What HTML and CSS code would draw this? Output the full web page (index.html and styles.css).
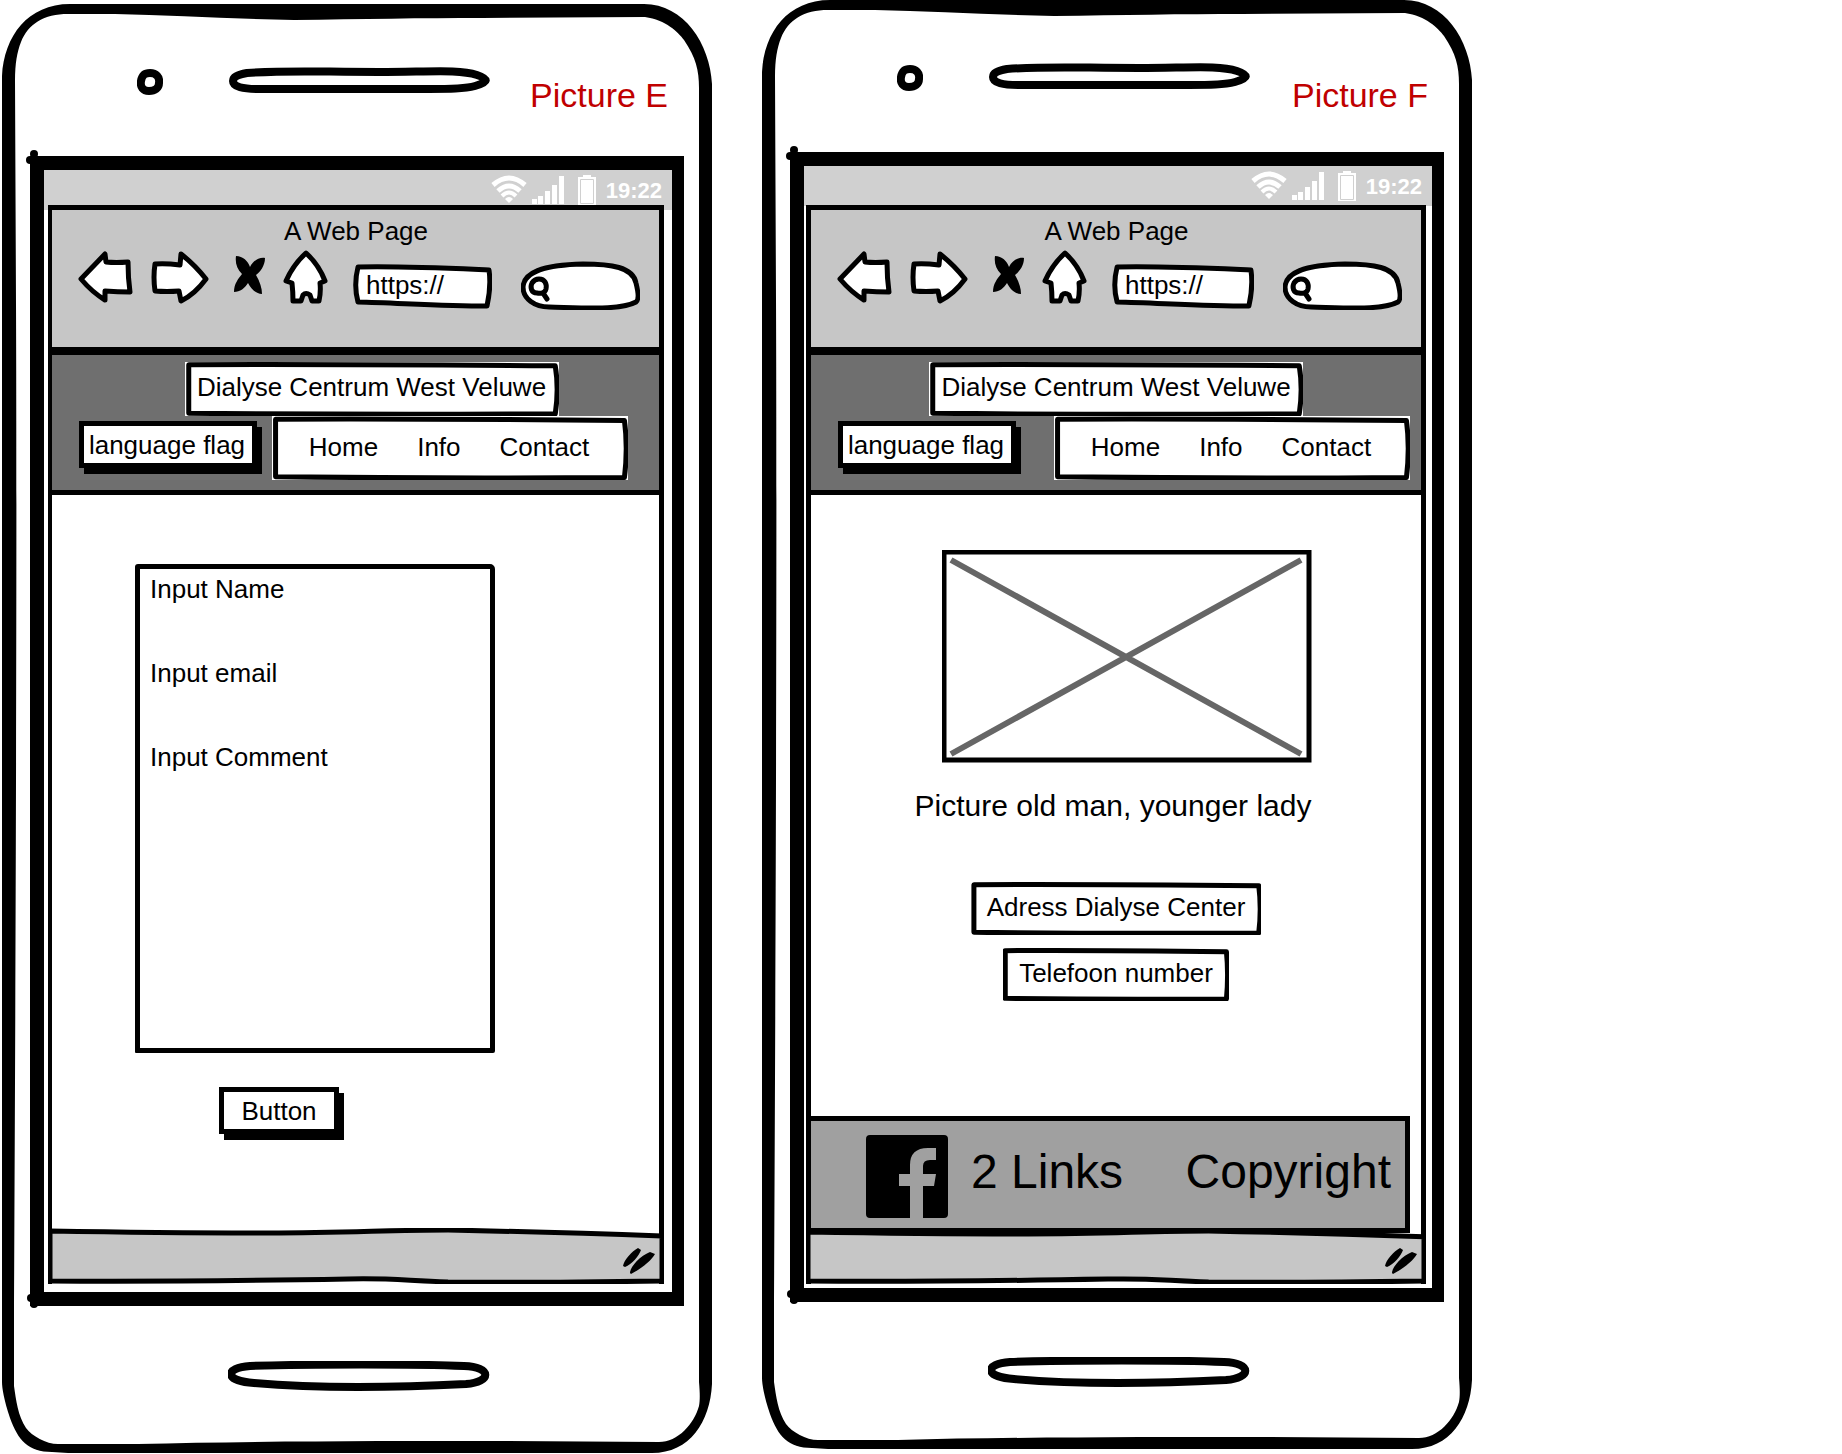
FILE: index.html
```html
<!DOCTYPE html>
<html lang="en">
<head>
<meta charset="utf-8">
<meta name="viewport" content="width=device-width, initial-scale=1">
<title>Dialyse Centrum West Veluwe</title>
<link rel="stylesheet" href="styles.css">
</head>
<body>
<svg class="defs" aria-hidden="true">
  <symbol id="frame" viewBox="0 0 710 1449" preserveAspectRatio="none">
    <path fill-rule="evenodd" d="M0 72C2 32 26 0 68 0H642C682 0 708 40 710 80V1380C708 1418 688 1449 650 1449H66L50 1448C26 1448 16 1436 8 1414C2 1396 0 1384 0 1378ZM13 76C13 60 15 48 19 38C26 20 42 10 66 10H113C170 11 230 15 292 16C360 15 420 14 480 14L643 13C664 16 676 28 682 36C694 54 697 66 697 84V1378C698 1390 698 1396 697 1402C692 1420 676 1438 657 1438L498 1437C380 1437 250 1437 136 1440H56C44 1440 30 1432 24 1424C16 1412 14 1396 12 1382L12 1300C14 900 15 500 14 300Z"/>
  </symbol>
  <symbol id="camera" viewBox="0 0 26 26"><path class="ink" stroke-width="8" d="M13 4C19 4 23 8 22 14C22 19 18 22 12 22C6 22 3 18 4 12C5 6 8 4 13 4Z"/></symbol>
  <symbol id="speaker" viewBox="0 0 262 26"><path class="ink" stroke-width="8" d="M18 6C60 3 90 5 150 5C200 5 230 2 248 8C260 12 260 15 246 19C235 22 220 22 200 22H30C14 22 4 20 4 14C4 10 8 8 18 6Z"/></symbol>
  <symbol id="home-key" viewBox="0 0 262 30"><path class="ink" stroke-width="8" d="M22 5C80 3 190 3 236 5C264 6 264 21 238 23C200 25 170 26 130 26C90 26 60 25 26 22C-4 20 -4 7 22 5Z"/></symbol>
  <symbol id="wifi" viewBox="0 0 36 28"><g fill="none" stroke="#fff" stroke-width="5"><path d="M2 10Q18 -4 34 10"/><path d="M7 16Q18 6 29 16"/></g><g fill="none" stroke="#fff" stroke-width="4"><path d="M11 21Q18 14 25 21"/></g><path fill="#fff" d="M14 24Q18 20 22 24L18 28Z"/></symbol>
  <symbol id="signal" viewBox="0 0 34 29"><path fill="#fff" d="M1 24h5v5H1ZM7 21h5v8H7ZM14 16h5v13h-5ZM21 10h5v19h-5ZM28 1h5v28h-5Z"/></symbol>
  <symbol id="battery" viewBox="0 0 20 30"><path fill="#fff" d="M6 0H14V2H19V30H1V2H6Z"/><path fill="none" stroke="#d0d0d0" d="M3.500 4.500H16.500V28.500H3.500Z"/></symbol>
  <symbol id="back" viewBox="0 0 55 54"><path class="ink white" stroke-width="5" d="M3 29L27 4L28 12Q38 13 50 12Q50 28 52 42Q40 42 27 41V50Q14 42 3 29Z"/></symbol>
  <symbol id="forward" viewBox="0 0 58 54"><path class="ink white" stroke-width="5" d="M4 14Q14 13 29 15L30 4Q44 15 55 29Q44 44 30 51L28 41Q16 42 4 41Q2 27 4 14Z"/></symbol>
  <symbol id="stop" viewBox="0 0 32 54"><path d="M2 6C9 6 14 11 16 17C19 11 25 7 31 8C31 16 26 22 22 25C26 32 28 38 28 44C22 44 17 39 14 33C11 38 6 42 0 42C0 34 4 29 8 24C3 19 1 13 2 6Z"/></symbol>
  <symbol id="house" viewBox="0 0 45 54"><path class="ink white" stroke-width="5" d="M23 3Q36 15 42 31L37 33Q38 42 36 51H29L27 45Q23 42 20 45L18 51H10Q10 42 9 33L3 31Q10 15 23 3Z"/></symbol>
  <symbol id="grip" viewBox="0 0 32 26"><path d="M0 18C1 12 9 3 15 0L18 2C16 8 9 16 2 19ZM7 25C7 19 17 8 27 4L32 6C29 12 18 21 8 26Z"/></symbol>
  <symbol id="box" viewBox="0 0 100 100" preserveAspectRatio="none" overflow="visible"><path class="pen" d="M1 5Q40 4 99 7Q100 50 99 96Q50 98 1 95Q1 50 1 5Z"/></symbol>
  <symbol id="statusline" viewBox="0 0 616 56" preserveAspectRatio="none" overflow="visible"><path class="pen shade" d="M2 3Q120 5 220 5C300 5 340 2 400 2Q500 4 614 8V53Q480 55 400 54C350 52 340 50 300 51Q120 54 2 53Z"/></symbol>
</svg>

<main class="board">
  <section class="phone phone-e">
    <svg class="backdrop" aria-hidden="true"><use href="#frame"/></svg>
    <div class="bezel">
      <svg class="camera" aria-hidden="true"><use href="#camera"/></svg>
      <svg class="speaker" aria-hidden="true"><use href="#speaker"/></svg>
      <h2 class="caption">Picture E</h2>
    </div>
    <div class="screen">
      <div class="system">
        <svg class="wifi" aria-hidden="true"><use href="#wifi"/></svg>
        <svg class="signal" aria-hidden="true"><use href="#signal"/></svg>
        <svg class="battery" aria-hidden="true"><use href="#battery"/></svg>
        <time>19:22</time>
      </div>
      <div class="browser">
        <div class="chrome">
          <p class="page-title">A Web Page</p>
          <div class="toolbar">
            <button class="tool back" aria-label="Back"><svg><use href="#back"/></svg></button>
            <button class="tool forward" aria-label="Forward"><svg><use href="#forward"/></svg></button>
            <button class="tool stop" aria-label="Stop"><svg><use href="#stop"/></svg></button>
            <button class="tool house" aria-label="Home"><svg><use href="#house"/></svg></button>
            <div class="url">
              <svg class="backdrop" viewBox="0 0 139 45" preserveAspectRatio="none" aria-hidden="true"><path class="pen" d="M5 3C50 2 90 4 136 6C138 20 136 33 134 42C90 42 45 39 5 38C2 27 2 15 5 3Z"/></svg>
              <input type="text" value="https://" aria-label="Address">
            </div>
            <div class="search">
              <svg class="backdrop" viewBox="0 0 119 49" aria-hidden="true"><path class="pen" d="M2 26C3 12 20 4 62 3C90 3 112 6 115 22Q119 38 115 41C100 49 70 47 28 46C14 46 2 38 2 26Z"/><path class="ink" stroke-width="5" d="M18 18C24 18 26 23 25 28C24 32 20 33 16 32C10 32 9 26 11 22C13 19 15 18 18 18ZM22 32L26 38"/></svg>
              <input type="search" aria-label="Search">
            </div>
          </div>
        </div>
        <header class="site-header">
          <h1 class="sketch brand"><svg class="backdrop" aria-hidden="true"><use href="#box"/></svg><span>Dialyse Centrum West Veluwe</span></h1>
          <div class="header-row">
            <button class="push language">language flag</button>
            <nav class="sketch menu"><svg class="backdrop" aria-hidden="true"><use href="#box"/></svg><a href="#home">Home</a><a href="#info">Info</a><a href="#contact">Contact</a></nav>
          </div>
        </header>
        <form class="content contact">
          <div class="fields">
            <label for="name">Input Name</label><input id="name" type="text">
            <label for="email">Input email</label><input id="email" type="email">
            <label for="comment">Input Comment</label><textarea id="comment"></textarea>
          </div>
          <button class="push submit" type="button">Button</button>
        </form>
        <div class="statusbar"><svg class="backdrop" aria-hidden="true"><use href="#statusline"/></svg><svg class="grip" aria-hidden="true"><use href="#grip"/></svg></div>
      </div>
    </div>
    <svg class="home-key" aria-hidden="true"><use href="#home-key"/></svg>
  </section>

  <section class="phone phone-f">
    <svg class="backdrop" aria-hidden="true"><use href="#frame"/></svg>
    <div class="bezel">
      <svg class="camera" aria-hidden="true"><use href="#camera"/></svg>
      <svg class="speaker" aria-hidden="true"><use href="#speaker"/></svg>
      <h2 class="caption">Picture F</h2>
    </div>
    <div class="screen">
      <div class="system">
        <svg class="wifi" aria-hidden="true"><use href="#wifi"/></svg>
        <svg class="signal" aria-hidden="true"><use href="#signal"/></svg>
        <svg class="battery" aria-hidden="true"><use href="#battery"/></svg>
        <time>19:22</time>
      </div>
      <div class="browser">
        <div class="chrome">
          <p class="page-title">A Web Page</p>
          <div class="toolbar">
            <button class="tool back" aria-label="Back"><svg><use href="#back"/></svg></button>
            <button class="tool forward" aria-label="Forward"><svg><use href="#forward"/></svg></button>
            <button class="tool stop" aria-label="Stop"><svg><use href="#stop"/></svg></button>
            <button class="tool house" aria-label="Home"><svg><use href="#house"/></svg></button>
            <div class="url">
              <svg class="backdrop" viewBox="0 0 139 45" preserveAspectRatio="none" aria-hidden="true"><path class="pen" d="M5 3C50 2 90 4 136 6C138 20 136 33 134 42C90 42 45 39 5 38C2 27 2 15 5 3Z"/></svg>
              <input type="text" value="https://" aria-label="Address">
            </div>
            <div class="search">
              <svg class="backdrop" viewBox="0 0 119 49" aria-hidden="true"><path class="pen" d="M2 26C3 12 20 4 62 3C90 3 112 6 115 22Q119 38 115 41C100 49 70 47 28 46C14 46 2 38 2 26Z"/><path class="ink" stroke-width="5" d="M18 18C24 18 26 23 25 28C24 32 20 33 16 32C10 32 9 26 11 22C13 19 15 18 18 18ZM22 32L26 38"/></svg>
              <input type="search" aria-label="Search">
            </div>
          </div>
        </div>
        <header class="site-header">
          <h1 class="sketch brand"><svg class="backdrop" aria-hidden="true"><use href="#box"/></svg><span>Dialyse Centrum West Veluwe</span></h1>
          <div class="header-row">
            <button class="push language">language flag</button>
            <nav class="sketch menu"><svg class="backdrop" aria-hidden="true"><use href="#box"/></svg><a href="#home">Home</a><a href="#info">Info</a><a href="#contact">Contact</a></nav>
          </div>
        </header>
        <div class="content about">
          <figure>
            <svg class="photo" viewBox="0 0 370 213" aria-hidden="true"><path fill="#fff" stroke="#000" stroke-width="5" d="M2 2H367V210H2Z"/><path stroke="#666" stroke-width="6" d="M9 10L359 204M359 10L9 204"/></svg>
            <figcaption>Picture old man, younger lady</figcaption>
          </figure>
          <p class="sketch info"><svg class="backdrop" aria-hidden="true"><use href="#box"/></svg><span>Adress Dialyse Center</span></p>
          <p class="sketch info"><svg class="backdrop" aria-hidden="true"><use href="#box"/></svg><span>Telefoon number</span></p>
        </div>
        <footer class="site-footer">
          <a href="#facebook" aria-label="Facebook"><svg class="facebook" viewBox="0 0 82 83" aria-hidden="true"><path d="M4 0H78Q82 0 82 4V79Q82 83 78 83H57V51H68L70 39H57V31Q57 25 64 25H70V13H62Q44 13 44 30V39H33V51H44V83H4Q0 83 0 79V4Q0 0 4 0Z"/></svg></a>
          <a href="#links">2 Links</a>
          <span class="copyright">Copyright</span>
        </footer>
        <div class="statusbar"><svg class="backdrop" aria-hidden="true"><use href="#statusline"/></svg><svg class="grip" aria-hidden="true"><use href="#grip"/></svg></div>
      </div>
    </div>
    <svg class="home-key" aria-hidden="true"><use href="#home-key"/></svg>
  </section>
</main>
</body>
</html>
```
FILE: styles.css
```css
* { box-sizing: border-box; }

body {
  margin: 0;
  background: #fff;
  color: #000;
  font: 26px/30px "Liberation Sans", Arial, sans-serif;
}

h1, h2, p, figure { margin: 0; font: inherit; }
a { color: inherit; text-decoration: none; }
svg { display: block; flex: none; }
button, input, textarea { font: inherit; color: inherit; padding: 0; }

.defs { position: absolute; width: 0; height: 0; }
.ink { fill: none; stroke: #000; stroke-linejoin: round; stroke-linecap: round; }
.ink.white { fill: #fff; }
.pen {
  fill: #fff;
  stroke: #000;
  stroke-width: 5px;
  stroke-linejoin: round;
  vector-effect: non-scaling-stroke;
}
.pen.shade { fill: #c6c6c6; }

/* Hand-drawn outlines lie behind the content of their box */
.backdrop {
  position: absolute;
  inset: 0;
  width: 100%;
  height: 100%;
  z-index: -1;
}

.board {
  display: grid;
  grid-template-columns: repeat(2, minmax(0, 710px));
  gap: 50px;
  align-items: start;
  padding-left: 2px;
}

.phone {
  position: relative;
  isolation: isolate;
  padding: 0 28px 62px;
}
.phone-e { margin-top: 4px; }

.bezel { display: flex; height: 152px; padding: 63px 16px 0 107px; }
.camera { width: 26px; height: 26px; margin: 2px 66px 0 0; }
.speaker { width: 262px; height: 26px; }
.caption { margin: 9px 0 0 auto; font-size: 34px; line-height: 38px; color: #c00000; white-space: nowrap; }
.phone-f .caption { margin-top: 13px; }

.screen {
  position: relative;
  border: solid #000;
  border-width: 14px 12px 14px 14px;
  padding-bottom: 8px;
}
.phone-f .screen { padding-bottom: 4px; }

/* Pen blots where the screen outline overshoots its corners */
.screen::before,
.screen::after {
  content: "";
  position: absolute;
  left: -14px;
  width: 8px;
  height: 8px;
  border-radius: 50%;
  background: #000;
}
.screen::before { top: -20px; box-shadow: -4px 6px 0 #000; }
.screen::after { bottom: -16px; box-shadow: -3px -6px 0 #000; }

.system {
  display: flex;
  height: 40px;
  padding: 5px 10px 0 0;
  justify-content: flex-end;
  background: #d0d0d0;
  color: #fff;
}
.wifi { width: 36px; height: 28px; margin-right: 4px; }
.signal { width: 34px; height: 29px; margin-right: 12px; }
.battery { width: 20px; height: 30px; margin-right: 9px; }
.system time { margin-top: 4px; font-size: 22px; line-height: 24px; font-weight: bold; }

.browser {
  position: relative;
  margin: -5px 8px 0 4px;
  border: solid #000;
  border-width: 5px 5px 0 4px;
}
.phone-f .browser { margin: -1px 6px 0 2px; border-left-width: 5px; }

.chrome { background: #c6c6c6; border-bottom: 8px solid #000; padding: 6px 19px 0 26px; height: 145px; }
.page-title { text-align: center; padding-right: 6px; }
.toolbar { display: flex; align-items: flex-start; padding-top: 4px; }
.tool { flex: none; height: 54px; border: 0; background: none; }
.tool svg { width: 100%; height: 100%; }
.back { width: 55px; margin-right: 18px; }
.forward { width: 58px; margin-right: 25px; }
.stop { width: 32px; margin-right: 17px; }
.house { width: 45px; margin-right: 25px; }
.url, .search { position: relative; isolation: isolate; }
.url { flex: 1; height: 45px; margin: 14px 29px 0 0; padding: 6px 8px 9px 13px; }
.search { flex: none; width: 119px; height: 49px; margin-top: 11px; padding: 8px 10px 8px 32px; }
.url input, .search input { display: block; width: 100%; height: 30px; border: 0; background: none; outline: 0; appearance: none; }

.site-header {
  display: flex;
  flex-direction: column;
  align-items: center;
  height: 140px;
  padding-top: 7px;
  background: #6f6f6f;
  border-bottom: 5px solid #000;
}
.sketch {
  position: relative;
  isolation: isolate;
  display: flex;
  justify-content: center;
  align-items: center;
  background: #fff;
  white-space: nowrap;
}
.brand { width: 374px; height: 54px; padding-bottom: 4px; }
.phone-e .brand { margin-left: 32px; }
.header-row { display: flex; align-self: stretch; justify-content: space-between; align-items: flex-start; padding: 0 31px 0 27px; }
.phone-f .header-row { padding-right: 11px; }
.menu { width: 356px; height: 64px; gap: 39px; padding: 0 2px 2px 0; }
.push {
  display: block;
  border: 5px solid #000;
  background: #fff;
  box-shadow: 5px 6px 0 #000;
  white-space: nowrap;
}
.language { width: 178px; height: 47px; margin-top: 5px; padding-right: 2px; }

.content { height: 733px; }
.contact { padding: 69px 0 0 83px; }
.fields {
  display: flex;
  flex-direction: column;
  width: 360px;
  max-width: 100%;
  height: 489px;
  padding: 5px 10px 0;
  border: 5px solid #000;
  border-radius: 3px 5px 2px 1px;
}
.fields label { flex: none; height: 30px; }
.fields input { flex: none; height: 54px; border: 0; outline: 0; background: none; }
.fields textarea { flex: 1; border: 0; outline: 0; background: none; resize: none; }
.submit { width: 120px; height: 47px; margin: 34px 0 0 84px; }

.about { display: flex; flex-direction: column; align-items: center; height: 621px; padding-top: 55px; }
.photo { width: 370px; height: 213px; margin-left: 27px; }
figcaption { margin: 26px 0 59px; padding-right: 6px; font-size: 30px; line-height: 34px; white-space: nowrap; }
.info { height: 53px; padding: 0 16px 4px; margin-bottom: 13px; }

.site-footer {
  display: flex;
  align-items: flex-start;
  height: 117px;
  margin-right: 11px;
  padding: 14px 14px 0 55px;
  border: solid #000;
  border-width: 5px 5px 5px 0;
  background: #a0a0a0;
  font-size: 48px;
  line-height: 74px;
  white-space: nowrap;
}
.facebook { width: 82px; height: 83px; margin-right: 23px; }
.copyright { margin-left: auto; }

.statusbar {
  position: relative;
  isolation: isolate;
  display: flex;
  justify-content: flex-end;
  height: 56px;
  margin: 0 -5px 0 -4px;
  padding: 20px 9px 0 0;
}
.phone-f .statusbar { height: 55px; margin: -4px -5px 0; padding-top: 19px; }
.grip { width: 32px; height: 26px; }

.home-key { width: 262px; height: 30px; margin: 55px 0 0 198px; }
```
